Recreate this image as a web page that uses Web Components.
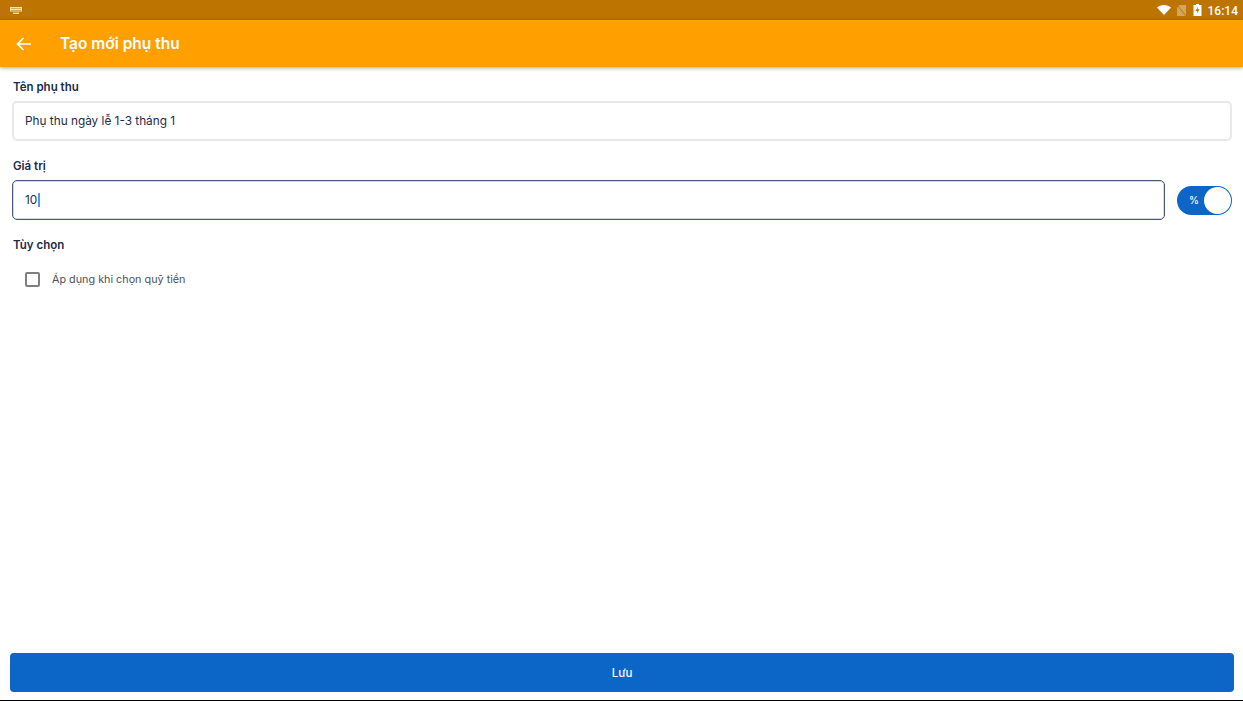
<!DOCTYPE html>
<html>
<head>
<meta charset="utf-8">
<title>Tạo mới phụ thu</title>
<style>
html, body { margin: 0; height: 100%; }
body { font-family: Inter, "Noto Sans", sans-serif; background: #fff; overflow: hidden; }
</style>
</head>
<body>
<surcharge-screen></surcharge-screen>
<script>
class StatusBar extends HTMLElement {
    constructor() {
        super()
        this.attachShadow({ mode: 'open' }).innerHTML = `
<style>
:host { display: flex; align-items: center; height: 20px; background: #bd7400; color: #fff; padding: 0 5px 0 10px; box-sizing: border-box; }
.time { font: 500 12px Roboto, sans-serif; margin-left: 6px; margin-top: 1px; }
.spacer { flex: 1; }
svg { display: block; }
.wifi { margin-right: 6px; }
.sim { margin-right: 7px; }
</style>
<svg width="12" height="7" viewBox="0 0 12 7"><path fill="#f3e3c6" d="M0 0h12v4.5H0z"/><path fill="#bd7400" d="M1.5 1h1v1h-1zM3.5 1h1v1h-1zM5.5 1h1v1h-1zM7.5 1h1v1h-1zM9.5 1h1v1h-1zM1.5 3h1v1h-1zM3.5 3h1v1h-1zM5.5 3h1v1h-1zM7.5 3h1v1h-1zM9.5 3h1v1h-1z"/><path fill="#f3e3c6" d="M3 5.6h6V7H3z"/></svg>
<span class="spacer"></span>
<svg class="wifi" width="14" height="10" viewBox="0 0 14 10"><path fill="#fff" d="M7 10 0 2.6C1.8 1 4.3 0 7 0s5.2 1 7 2.6z"/></svg>
<svg class="sim" width="9" height="11" viewBox="0 0 9 11"><path fill="#d4a55c" d="M2.5 0H9v11H0V2.5z"/><path stroke="#bd7400" stroke-width="1" d="M0 0l9 11"/></svg>
<svg width="9" height="12" viewBox="0 0 8 12"><path fill="#fff" d="M2.5 0h3v1H8v11H0V1h2.5z"/><path fill="#bd7400" d="M4.6 2.5 2 7h1.7l-.4 2.8L6 5.2H4.2z"/></svg>
<span class="time">16:14</span>`
    }
}

class AppBar extends HTMLElement {
    constructor() {
        super()
        this.attachShadow({ mode: 'open' }).innerHTML = `
<style>
:host { display: flex; align-items: center; height: 47px; background: #ffa000; color: #fff; padding-left: 16px; box-sizing: border-box; box-shadow: 0 1px 4px rgba(0,0,0,.35); position: relative; }
svg { display: block; margin-right: 29px; }
.title { font-size: 15.5px; font-weight: 600; }
</style>
<svg width="15" height="14" viewBox="0 0 15 14" fill="none" stroke="#fff" stroke-width="1.7"><path d="M15 7H1.5M7.5 1 1.5 7l6 6"/></svg>
<span class="title"><slot></slot></span>`
    }
}

class FieldLabel extends HTMLElement {
    constructor() {
        super()
        this.attachShadow({ mode: 'open' }).innerHTML = `
<style>
:host { display: block; font-size: 11.5px; font-weight: 600; line-height: 14px; color: #1c2a4a; padding-left: 1px; }
</style>
<slot></slot>`
    }
}

class TextBox extends HTMLElement {
    constructor() {
        super()
        this.attachShadow({ mode: 'open' }).innerHTML = `
<style>
:host { display: flex; align-items: center; height: 40px; flex: 1; box-sizing: border-box; border: 2px solid #e8e8e8; border-radius: 5px; padding: 0 11px; font-size: 11.8px; color: #1c2a4a; background: #fff; }
:host([focused]) { border: 1px solid #47587c; padding: 0 12px; box-shadow: inset 0 0 0 1px #d5dae4; }
.caret { display: none; width: 2px; height: 14px; background: #5f95dc; margin-left: 1px; }
:host([focused]) .caret { display: block; }
</style>
<slot></slot><span class="caret"></span>`
    }
}

class UnitToggle extends HTMLElement {
    constructor() {
        super()
        this.attachShadow({ mode: 'open' }).innerHTML = `
<style>
:host { display: flex; align-items: center; width: 55px; height: 29px; box-sizing: border-box; border-radius: 15px; background: #0c66c8; color: #fff; font-size: 10px; font-weight: 500; padding: 1px 1px 1px 12px; justify-content: space-between; }
.knob { width: 27px; height: 27px; border-radius: 50%; background: #fff; }
</style>
<slot></slot><span class="knob"></span>`
    }
}

class CheckRow extends HTMLElement {
    constructor() {
        super()
        this.attachShadow({ mode: 'open' }).innerHTML = `
<style>
:host { display: flex; align-items: center; gap: 12px; padding-left: 13px; font-size: 10.8px; color: #4a4f5e; }
.box { width: 15px; height: 15px; box-sizing: border-box; border: 2px solid #808080; border-radius: 2px; }
</style>
<span class="box"></span><slot></slot>`
    }
}

class PrimaryButton extends HTMLElement {
    constructor() {
        super()
        this.attachShadow({ mode: 'open' }).innerHTML = `
<style>
:host { display: flex; align-items: center; justify-content: center; height: 39px; background: #0c66c8; border-radius: 4px; color: #fff; font-size: 11.5px; font-weight: 500; }
</style>
<slot></slot>`
    }
}

class SurchargeScreen extends HTMLElement {
    constructor() {
        super()
        this.attachShadow({ mode: 'open' }).innerHTML = `
<style>
:host { display: flex; flex-direction: column; height: 701px; box-sizing: border-box; border-bottom: 1px solid #000; background: #fff; }
.form { flex: 1; display: flex; flex-direction: column; padding: 13px 11px 0 12px; }
field-label { margin-bottom: 7px; }
.row { display: flex; align-items: center; gap: 12px; margin-bottom: 18px; }
.footer { padding: 0 9px 8px 10px; }
check-row { margin-top: 13px; }
</style>
<status-bar></status-bar>
<app-bar>Tạo mới phụ thu</app-bar>
<div class="form">
  <field-label>Tên phụ thu</field-label>
  <div class="row"><text-box>Phụ thu ngày lễ 1-3 tháng 1</text-box></div>
  <field-label>Giá trị</field-label>
  <div class="row"><text-box focused>10</text-box><unit-toggle>%</unit-toggle></div>
  <field-label>Tùy chọn</field-label>
  <check-row>Áp dụng khi chọn quỹ tiền</check-row>
</div>
<div class="footer"><primary-button>Lưu</primary-button></div>`
    }
}

customElements.define("status-bar", StatusBar)
customElements.define("app-bar", AppBar)
customElements.define("field-label", FieldLabel)
customElements.define("text-box", TextBox)
customElements.define("unit-toggle", UnitToggle)
customElements.define("check-row", CheckRow)
customElements.define("primary-button", PrimaryButton)
customElements.define("surcharge-screen", SurchargeScreen)
</script>
</body>
</html>
